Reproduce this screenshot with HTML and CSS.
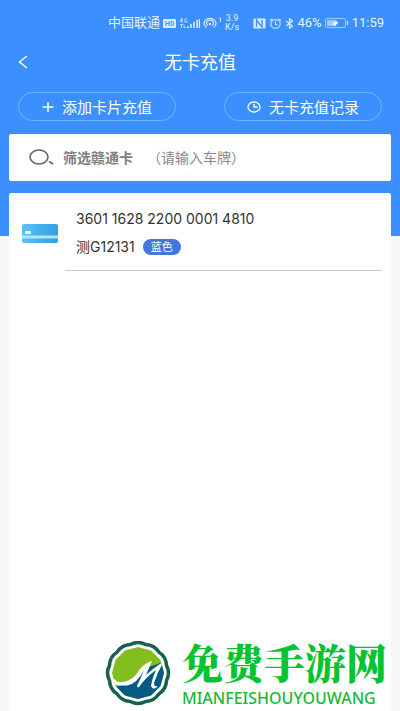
FILE: index.html
```html
<!DOCTYPE html>
<html lang="zh-CN">
<head>
<meta charset="utf-8">
<meta name="viewport" content="width=device-width, initial-scale=1">
<title>无卡充值</title>
<link rel="stylesheet" href="styles.css">
</head>
<body>
<div class="page">
  <div class="status">
    <span>中国联通</span>
    <svg class="hd" width="13" height="9" viewBox="0 0 13 9"><rect width="13" height="9" rx="1" fill="#d9ecff"/><path d="M3 2v5M6 2v5M3 4.500h3M8 2.500v4h1.200q1.500 0 1.500-2t-1.500-2z" fill="none" stroke="#3c8ffe"/></svg>
    <svg class="signal" width="21" height="11" viewBox="0 0 21 11"><path d="M3 0L1 3h3M3 0v4.500M8 1H6v3h2V3M1 6.500h3M2.500 6.500V10M5 6.500v3h2" fill="none" stroke="#d9ecff" stroke-width=".8"/><path d="M9 10V8M12 10V6M15 10V4M18 10V2M20.500 10V1" stroke="#d9ecff" stroke-width="1.600"/></svg>
    <svg class="hotspot" width="19" height="12" viewBox="0 0 19 12"><g fill="none" stroke="#d9ecff" stroke-width="1.200"><path d="M3.500 10.500A6 5 0 1 1 10.500 10.500M5 8.500A3.500 2.900 0 1 1 9 8.500"/><path d="M16 2l1.500-1v4" stroke-width=".9"/></g><ellipse cx="7" cy="7" rx="1.300" ry="1.200" fill="#d9ecff"/></svg>
    <span class="speed">3.9<br>K/s</span>
    <span class="spacer"></span>
    <svg class="nfc" width="13" height="11" viewBox="0 0 13 11"><rect x=".5" y=".5" width="12" height="10" rx="1" fill="#d9ecff"/><path d="M3.500 9V2l5.500 7V2" fill="none" stroke="#3c8ffe" stroke-width="1.300"/></svg>
    <svg class="alarm" width="13" height="11" viewBox="0 0 13 11"><g fill="none" stroke="#d9ecff" stroke-width="1.100"><ellipse cx="6.500" cy="6" rx="4.700" ry="4.200"/><path d="M1 2.500L3.500.7M12 2.500L9.500.7M6.500 3.500V6.300L8.500 7.200"/></g></svg>
    <svg class="bluetooth" width="9" height="11" viewBox="0 0 9 11"><path d="M1 3l6.500 5L4.500 10.300V.7L7.500 3 1 8" fill="none" stroke="#d9ecff" stroke-width="1.200"/></svg>
    <span>46%</span>
    <svg class="battery" width="24" height="10" viewBox="0 0 24 10"><rect x=".5" y=".5" width="20" height="9" rx="1.500" fill="none" stroke="#9dcbff"/><rect x="2" y="2" width="9" height="6" fill="#9dcbff"/><path d="M7 6.500l5-4v2h2L9 8.200V6.500z" fill="#fff"/><path d="M22.500 3v4" stroke="#bcdcff" stroke-width="1.500"/></svg>
    <span>11:59</span>
  </div>

  <header class="titlebar">
    <button class="back" type="button" aria-label="返回"><svg width="10" height="14" viewBox="0 0 10 14"><path d="M9 1L1.500 7 9 13" fill="none" stroke="#fff" stroke-width="1.500"/></svg></button>
    <h1>无卡充值</h1>
  </header>

  <nav class="actions">
    <button class="pill" type="button"><svg width="12" height="10" viewBox="0 0 12 10"><path d="M.5 5h11M6 0v10" stroke="#fff" stroke-width="1.500"/></svg>添加卡片充值</button>
    <button class="pill" type="button"><svg width="14" height="12" viewBox="0 0 14 12"><ellipse cx="7" cy="6" rx="6" ry="5" fill="none" stroke="#fff" stroke-width="1.300"/><path d="M7 3v3h3.500" fill="none" stroke="#fff" stroke-width="1.300"/></svg>无卡充值记录</button>
  </nav>

  <main class="content">
    <form class="search">
      <svg width="26" height="17" viewBox="0 0 26 17"><ellipse cx="10" cy="8" rx="9" ry="7" fill="none" stroke="#666" stroke-width="1.600"/><path d="M20 12.500l4 2.500" stroke="#666" stroke-width="1.800"/></svg>
      <label for="plate">筛选赣通卡</label>
      <input id="plate" type="text" placeholder="（请输入车牌）">
    </form>

    <section class="cards">
      <article class="card">
        <svg class="card-icon" width="36" height="19" viewBox="0 0 36 19"><defs><linearGradient id="g" x2="1" y2="0"><stop stop-color="#5cc0f5"/><stop offset="1" stop-color="#2f9fe8"/></linearGradient></defs><rect width="36" height="19" rx="2" fill="url(#g)"/><path d="M0 13h36" stroke="#b5e4fc" stroke-width="3"/><rect x="3" y="7" width="6" height="3" rx="1" fill="#fff"/></svg>
        <div class="card-info">
          <p>3601 1628 2200 0001 4810</p>
          <p class="plate">测G12131<span class="badge">蓝色</span></p>
        </div>
      </article>
    </section>
  </main>

  <div class="watermark">
    <svg width="66" height="66" viewBox="0 0 66 66">
      <path d="M61.500 24.400Q65.500 32 61.500 39.600Q61.100 48.300 53.900 52.900Q49.300 60.100 40.600 60.500Q33 64.500 25.400 60.500Q16.700 60.100 12.100 52.900Q4.900 48.300 4.500 39.600Q.5 32 4.500 24.400Q4.900 15.700 12.100 11.100Q16.700 3.900 25.400 3.500Q33-.5 40.600 3.500Q49.300 3.900 53.900 11.100Q61.100 15.700 61.500 24.400Z" fill="#fff" stroke="#17604f" stroke-width="3.500" stroke-linejoin="round"/>
      <clipPath id="disc"><path d="M59 32L55.500 45 46 54.500 33 58 20 54.500 10.500 45 7 32 10.500 19 20 9.500 33 6 46 9.500 55.500 19Z"/></clipPath>
      <g clip-path="url(#disc)"><rect width="66" height="66" fill="#83be1f"/><path d="M8 46Q22 45 31 36L38 28 58 21 66 20V66H8z" fill="#075a83"/><path d="M5 37.500Q10 37 12 40.500Q17 42 22 40Q30 37 35 28Q40 22 47 20Q44 27 41 34Q50 26 59 20Q53 30 49 42Q49 46 53 45.500Q48 50 46 45Q47 38 51 29Q41 36 34 46Q32 47 32 45Q36 37 39 29Q32 43 22 44.500Q13 45 8 43z" fill="#fff"/></g>
    </svg>
    <div class="brand"><strong>免费手游网</strong><span>MIANFEISHOUYOUWANG</span></div>
  </div>
</div>
</body>
</html>
```
FILE: styles.css
```css
* { box-sizing: border-box; }

body {
  margin: 0;
  font-family: "Noto Sans", "Noto Sans CJK SC", sans-serif;
  font-size: 14px;
  color: #333;
  background: #f7f7f7;
}

button { font: inherit; color: inherit; background: none; border: 0; padding: 0; }
svg { display: block; flex: none; }

.page {
  position: relative;
  min-height: 100vh;
  display: flex;
  flex-direction: column;
  background: linear-gradient(#3c8ffe, #3c8ffe) top / 100% 236px no-repeat;
}

.status {
  display: flex;
  align-items: center;
  gap: 3px;
  height: 46px;
  padding: 0 16px 0 108px;
  color: #e4f2ff;
  font-family: Roboto, "Noto Sans CJK SC", sans-serif;
  font-size: 13px;
  line-height: 16px;
}
.speed { font-size: 9px; line-height: 9px; text-align: center; }
.spacer { flex: 1; }

.titlebar {
  display: grid;
  grid-template-columns: 40px 1fr 40px;
  align-items: center;
  height: 32px;
  color: #fff;
}
.back { justify-self: end; padding: 0 12px 0 8px; }
h1 { margin: 0; font-size: 18px; line-height: 24px; font-weight: 400; text-align: center; }

.actions {
  display: flex;
  justify-content: space-between;
  padding: 14px 18px 0;
}
.pill {
  display: flex;
  align-items: center;
  justify-content: center;
  gap: 8px;
  flex: 0 1 158px;
  height: 29px;
  border: 1px solid #70b4ff;
  border-radius: 15px;
  color: #fff;
  font-size: 15px;
  line-height: 20px;
  white-space: nowrap;
}

.content {
  flex: 1;
  display: flex;
  flex-direction: column;
  gap: 12px;
  padding: 13px 9px 0;
}
.search {
  display: flex;
  align-items: center;
  height: 47px;
  padding: 0 20px;
  background: #fff;
  border-radius: 2px;
}
.search label { margin: 0 14px 0 8px; color: #808080; font-weight: 700; line-height: 20px; white-space: nowrap; }
.search input {
  flex: 1;
  min-width: 0;
  padding: 0;
  border: 0;
  outline: 0;
  background: none;
  font: inherit;
  line-height: 20px;
}
.search input::placeholder { color: #888; opacity: 1; }

.cards { flex: 1; background: #fff; border-radius: 2px 2px 0 0; }
.card { display: flex; padding: 0 9px 0 13px; }
.card-icon { margin: 31px 7px 0 0; }
.card-info {
  flex: 1;
  padding: 16px 0 13px 11px;
  border-bottom: 1px solid #ccc;
  font-family: Inter, "Noto Sans CJK SC", sans-serif;
}
.card-info p { margin: 0; line-height: 20px; }
.card-info .plate { display: flex; align-items: center; gap: 8px; margin-top: 8px; }
.badge {
  padding: 0 8px;
  border-radius: 8px;
  background: #4277df;
  color: #fff;
  font-size: 11px;
  line-height: 16px;
}

.watermark {
  position: absolute;
  right: 13px;
  bottom: 4px;
  display: flex;
  align-items: center;
  gap: 11px;
  color: #06c32f;
}
.brand { display: flex; flex-direction: column; gap: 8px; }
.brand strong {
  font-family: "Noto Serif CJK SC", "Noto Sans CJK SC", serif;
  font-size: 41px;
  line-height: 40px;
  font-weight: 900;
}
.brand span { font-size: 16px; line-height: 16px; font-weight: 500; color: #18b936; }
```
